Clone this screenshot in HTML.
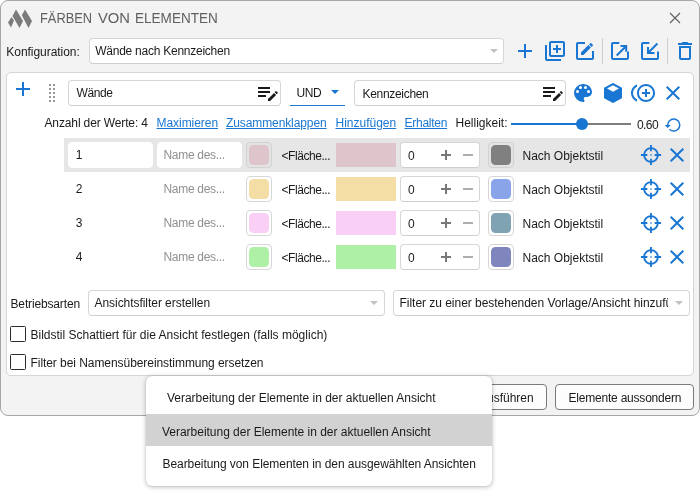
<!DOCTYPE html>
<html lang="de">
<head>
<meta charset="utf-8">
<title>Färben von Elementen</title>
<style>
*{box-sizing:border-box;margin:0;padding:0}
html,body{width:700px;height:494px;background:#fff;overflow:hidden}
body{font-family:"Liberation Sans",sans-serif;font-size:12px;color:#1a1a1a;position:relative}
.abs{position:absolute}
#win{position:absolute;left:0;top:0;width:700px;height:416px;background:#f3f3f3;border:1px solid #a6a6a6;border-radius:8px}
#panel{position:absolute;left:6px;top:72px;width:688px;height:304px;background:#fff;border:1px solid #d5d5d5;border-radius:5px}
.t{position:absolute;white-space:nowrap;line-height:16px;height:16px}
.tb{position:absolute;background:#fff;border:1px solid #d6d6d6;border-bottom-color:#cfcfcf;border-radius:4px}
.lnk{color:#1976d2;text-decoration:underline}
.ico{position:absolute;width:24px;height:24px;fill:#1976d2}
.sw{position:absolute;width:26px;height:26px;border:1px solid #d6d6d6;border-radius:4px;background:#fff}
.sw i{position:absolute;left:2px;top:2px;width:20px;height:20px;border-radius:4.500px}
.sw.r1{background:#e3e3e3;border-color:#d2d2d2}
.rect{position:absolute;left:336px;width:60px;height:24px}
.ph{color:#909090}
.pm{position:absolute;background:#787878}
.cb{position:absolute;left:10px;width:16px;height:16px;border:1px solid #2b2b2b;border-radius:1.500px;background:#fff}
.btn{position:absolute;top:384px;height:26px;border:1px solid #7a7a7a;border-radius:4px;background:#fdfdfd}
#pop{position:absolute;left:146px;top:376px;width:346px;height:110px;background:#fff;border-radius:6px;box-shadow:0 1px 5px rgba(0,0,0,.28),0 0 1px rgba(0,0,0,.25)}
#hl{position:absolute;left:146px;top:414px;width:346px;height:32px;background:#d2d2d2}
#rowhl{position:absolute;left:64px;top:138px;width:626px;height:34px;background:#e6e6e6}
</style>
</head>
<body>
<div id="root" style="position:absolute;left:0;top:0;width:700px;height:494px;will-change:transform;opacity:0.999">
<div id="win"></div>

<!-- title bar -->
<svg class="abs" style="left:0;top:0" width="40" height="34" viewBox="0 0 40 34"><path fill="#7b7b7b" d="M11.500 17 L14 20.600 L11 27.600 L8 22.500 Z M16 9.600 L23 21 L19.500 27.900 L12.500 16 Z M25 9.600 L32 21 L28.500 27.900 L21.800 15.200 Z"/></svg>
<div class="t" id="title" style="left:40.300px;top:10px;font-size:15px;color:#606060;transform-origin:0 0;transform:scaleX(0.856)">FÄRBEN</div><div class="t" id="title2" style="left:98px;top:10px;font-size:15px;color:#606060;transform-origin:0 0;transform:scaleX(0.985)">VON</div><div class="t" id="title3" style="left:134.500px;top:10px;font-size:15px;color:#606060;transform-origin:0 0;transform:scaleX(0.903)">ELEMENTEN</div>
<svg class="abs" style="left:669px;top:12px" width="13" height="13" viewBox="0 0 13 13"><path d="M1 1 L11 11 M11 1 L1 11" stroke="#606060" stroke-width="1.1" fill="none"/></svg>

<!-- config row -->
<div class="t" id="konf" style="letter-spacing:-0.040px;left:6.300px;top:44px">Konfiguration:</div>
<div class="tb" style="left:89px;top:38px;width:415px;height:26px"></div>
<div class="t" id="cfgv" style="letter-spacing:-0.245px;left:95.200px;top:43px">Wände nach Kennzeichen</div>
<svg class="abs" style="left:489.500px;top:49px" width="8" height="4" viewBox="0 0 8 4"><path d="M0 0H8L4 4Z" fill="#c2c2c2"/></svg>

<svg class="ico" style="left:513px;top:39px" viewBox="0 0 24 24"><path d="M19,13H13V19H11V13H5V11H11V5H13V11H19V13Z"/></svg>
<svg class="ico" style="left:543px;top:39px" viewBox="0 0 24 24"><path d="M4 6H2V20C2 21.1 2.9 22 4 22H18V20H4V6M20 2H8C6.9 2 6 2.9 6 4V16C6 17.1 6.9 18 8 18H20C21.1 18 22 17.1 22 16V4C22 2.900 21.1 2 20 2M20 16H8V4H20V16M13 14H15V11H18V9H15V6H13V9H10V11H13V14Z"/></svg>
<svg class="ico" style="left:573px;top:39px" viewBox="0 0 24 24"><path d="M5,3C3.89,3 3,3.89 3,5V19A2,2 0 0,0 5,21H19A2,2 0 0,0 21,19V12H19V19H5V5H12V3H5M17.78,4C17.61,4 17.43,4.07 17.3,4.2L16.08,5.41L18.58,7.91L19.8,6.7C20.06,6.44 20.06,6 19.8,5.75L18.250,4.2C18.12,4.07 17.95,4 17.78,4M15.37,6.12L8,13.5V16H10.5L17.87,8.62L15.37,6.12Z"/></svg>
<div class="abs" style="left:602px;top:38px;width:1px;height:26px;background:#cfcfcf"></div>
<svg class="ico" style="left:608px;top:39px" viewBox="0 0 24 24"><path d="M5,3C3.9,3 3,3.9 3,5V19A2,2 0 0,0 5,21H19A2,2 0 0,0 21,19V12.400H19V19H5V5H11.300V3H5Z M12.500,6H19.200V12.700H17.200V9.410L9.400,17.200L8,15.800L15.790,8H12.500Z" transform="translate(0,0)"/></svg>
<svg class="ico" style="left:638px;top:39px" viewBox="0 0 24 24"><path d="M5,3C3.9,3 3,3.9 3,5V19A2,2 0 0,0 5,21H19A2,2 0 0,0 21,19V12.400H19V19H5V5H11.300V3H5Z M9,15V8H11V11.590L18.750,3.850L20.150,5.250L12.410,13H16.500V15Z"/></svg>
<div class="abs" style="left:667px;top:38px;width:1px;height:26px;background:#cfcfcf"></div>
<svg class="ico" style="left:673px;top:39px" viewBox="0 0 24 24"><path d="M6,19A2,2 0 0,0 8,21H16A2,2 0 0,0 18,19V7H6V19M8,9H16V19H8V9M15.5,4L14.5,3H9.5L8.5,4H5V6H19V4H15.5Z"/></svg>

<!-- panel -->
<div id="panel"></div>
<svg class="ico" style="left:11px;top:77px" viewBox="0 0 24 24"><path d="M19,13H13V19H11V13H5V11H11V5H13V11H19V13Z"/></svg>
<svg class="abs" style="left:49px;top:84px" width="7" height="18" viewBox="0 0 7 18"><g fill="#969696"><rect x="0" y="0" width="2" height="2"/><rect x="4" y="0" width="2" height="2"/><rect x="0" y="4" width="2" height="2"/><rect x="4" y="4" width="2" height="2"/><rect x="0" y="8" width="2" height="2"/><rect x="4" y="8" width="2" height="2"/><rect x="0" y="12" width="2" height="2"/><rect x="4" y="12" width="2" height="2"/><rect x="0" y="16" width="2" height="2"/><rect x="4" y="16" width="2" height="2"/></g></svg>

<div class="tb" style="left:68px;top:80px;width:213px;height:26px"></div>
<div class="t" id="wande" style="letter-spacing:-0.370px;left:76.500px;top:85.300px">Wände</div>
<svg class="ico" style="left:256px;top:81px;fill:#1a1a1a" viewBox="0 0 24 24"><path d="M2,6.100V7.900H14V6.100H2M2,10.100V11.900H14V10.100H2M20.040,10.130C19.900,10.130 19.760,10.190 19.650,10.300L18.650,11.300L20.700,13.350L21.700,12.350C21.920,12.140 21.920,11.790 21.700,11.580L20.420,10.300C20.310,10.190 20.180,10.130 20.040,10.130M18.070,11.880L12,17.940V20H14.060L20.120,13.930L18.070,11.880M2,14.100V15.900H10V14.100H2Z"/></svg>

<div class="t" id="und" style="letter-spacing:-0.450px;left:296.500px;top:85px">UND</div>
<svg class="abs" style="left:331px;top:90px" width="8" height="4" viewBox="0 0 8 4"><path d="M0 0H8L4 4Z" fill="#1976d2"/></svg>
<div class="abs" style="left:290px;top:105px;width:55px;height:1px;background:#1976d2"></div>

<div class="tb" style="left:354px;top:80px;width:212px;height:26px"></div>
<div class="t" id="kenn" style="letter-spacing:-0.310px;left:362.500px;top:85.500px">Kennzeichen</div>
<svg class="ico" style="left:541px;top:81px;fill:#1a1a1a" viewBox="0 0 24 24"><path d="M2,6.100V7.900H14V6.100H2M2,10.100V11.900H14V10.100H2M20.040,10.130C19.900,10.130 19.760,10.190 19.650,10.300L18.650,11.300L20.700,13.350L21.700,12.350C21.920,12.140 21.920,11.790 21.700,11.580L20.420,10.300C20.310,10.190 20.180,10.130 20.040,10.130M18.070,11.880L12,17.940V20H14.060L20.120,13.930L18.070,11.880M2,14.100V15.900H10V14.100H2Z"/></svg>

<svg class="ico" style="left:571.300px;top:81px" viewBox="0 0 24 24"><path d="M17.500,12A1.500,1.500 0 0,1 16,10.500A1.500,1.500 0 0,1 17.500,9A1.500,1.500 0 0,1 19,10.500A1.500,1.500 0 0,1 17.500,12M14.500,8A1.500,1.500 0 0,1 13,6.500A1.500,1.500 0 0,1 14.500,5A1.500,1.500 0 0,1 16,6.500A1.500,1.500 0 0,1 14.500,8M9.500,8A1.500,1.500 0 0,1 8,6.500A1.500,1.500 0 0,1 9.500,5A1.500,1.500 0 0,1 11,6.500A1.500,1.500 0 0,1 9.500,8M6.500,12A1.500,1.500 0 0,1 5,10.500A1.500,1.500 0 0,1 6.500,9A1.500,1.500 0 0,1 8,10.500A1.500,1.500 0 0,1 6.500,12M12,3A9,9 0 0,0 3,12A9,9 0 0,0 12,21A1.500,1.500 0 0,0 13.500,19.500C13.500,19.110 13.350,18.760 13.110,18.500C12.880,18.230 12.730,17.880 12.730,17.500A1.500,1.500 0 0,1 14.230,16H16A5,5 0 0,0 21,11C21,6.580 16.970,3 12,3Z"/></svg>
<svg class="ico" style="left:601px;top:81px" viewBox="0 0 24 24"><path d="M21,16.500C21,16.880 20.790,17.210 20.470,17.380L12.570,21.820C12.410,21.940 12.210,22 12,22C11.790,22 11.590,21.940 11.430,21.820L3.530,17.380C3.210,17.210 3,16.880 3,16.500V7.500C3,7.120 3.210,6.790 3.530,6.620L11.430,2.180C11.590,2.060 11.790,2 12,2C12.210,2 12.410,2.060 12.570,2.180L20.470,6.620C20.790,6.790 21,7.120 21,7.500V16.500M12,4.150L6.040,7.500L12,10.850L17.960,7.500L12,4.150Z"/></svg>
<svg class="ico" style="left:630.500px;top:81px" viewBox="0 0 24 24"><path d="M16,8H14V11H11V13H14V16H16V13H19V11H16M2,12C2,9.210 3.640,6.800 6,5.680V3.500C2.500,4.760 0,8.090 0,12C0,15.910 2.500,19.240 6,20.500V18.320C3.640,17.200 2,14.790 2,12M15,3C10.040,3 6,7.040 6,12C6,16.960 10.040,21 15,21C19.960,21 24,16.960 24,12C24,7.040 19.960,3 15,3M15,19C11.140,19 8,15.860 8,12C8,8.140 11.140,5 15,5C18.860,5 22,8.140 22,12C22,15.860 18.860,19 15,19Z"/></svg>
<svg class="ico" style="left:661px;top:81px" viewBox="0 0 24 24"><path d="M19,6.410L17.590,5L12,10.590L6.410,5L5,6.410L10.590,12L5,17.590L6.410,19L12,13.410L17.590,19L19,17.590L13.410,12L19,6.410Z"/></svg>

<!-- links row -->
<div class="t" id="anz" style="letter-spacing:-0.130px;left:44.500px;top:115.100px">Anzahl der Werte: 4</div>
<div class="t lnk" id="l1" style="letter-spacing:-0.050px;left:156.500px;top:115.100px">Maximieren</div>
<div class="t lnk" id="l2" style="letter-spacing:-0.100px;left:226px;top:115.100px">Zusammenklappen</div>
<div class="t lnk" id="l3" style="left:335.500px;top:115.100px">Hinzufügen</div>
<div class="t lnk" id="l4" style="letter-spacing:-0.260px;left:404.500px;top:115.100px">Erhalten</div>
<div class="t" id="hell" style="left:455.500px;top:115.100px">Helligkeit:</div>
<div class="abs" style="left:511px;top:123px;width:71px;height:2px;background:#1976d2"></div>
<div class="abs" style="left:582px;top:123px;width:49px;height:2px;background:#7d7d7d"></div>
<div class="abs" style="left:576px;top:118px;width:12px;height:12px;border-radius:6px;background:#1976d2"></div>
<div class="t" id="v060" style="letter-spacing:-0.600px;left:637px;top:116.500px">0.60</div>
<svg class="abs" style="left:663.800px;top:116px;fill:#1976d2" width="18" height="18" viewBox="0 0 24 24"><path d="M13,3A9,9 0 0,0 4,12H1L4.890,15.890L4.960,16.030L9,12H6A7,7 0 0,1 13,5A7,7 0 0,1 20,12A7,7 0 0,1 13,19C11.070,19 9.320,18.210 8.060,16.940L6.640,18.360C8.270,20 10.500,21 13,21A9,9 0 0,0 22,12A9,9 0 0,0 13,3Z"/></svg>

<!-- rows -->
<div id="rowhl"></div>
<div class="tb" style="left:68px;top:142px;width:85px;height:26px;border-color:#fff"></div>
<div class="tb" style="left:157px;top:142px;width:85px;height:26px;border-color:#fff"></div>
<div class="t" style="left:75.800px;top:146.5px">1</div>
<div class="t ph" style="left:163.500px;top:146.5px;letter-spacing:-0.3px">Name des...</div>
<div class="sw r1" style="left:246px;top:142px"><i style="background:#dec5cb"></i></div>
<div class="t" style="left:281.500px;top:148px;letter-spacing:-0.45px">&lt;Fläche...</div>
<div class="rect" style="top:143px;background:#dec5cb"></div>
<div class="tb" style="left:400px;top:142px;width:80px;height:26px"></div>
<div class="t" style="left:408px;top:148px">0</div>
<div class="pm" style="left:441px;top:154.3px;width:10px;height:1.400px"></div><div class="pm" style="left:445.300px;top:150.0px;width:1.400px;height:10px"></div>
<div class="pm" style="left:463px;top:154.3px;width:10px;height:1.400px;background:#adadad"></div>
<div class="sw r1" style="left:488px;top:142px"><i style="background:#808080"></i></div>
<div class="t" style="left:522.500px;top:148px">Nach Objektstil</div>
<svg class="abs" style="left:640px;top:144px" width="22" height="22" viewBox="0 0 24 24"><g fill="none" stroke="#1976d2" stroke-width="2"><circle cx="12" cy="12" r="7.500"/><path d="M12 1V8M12 16V23M1 12H8M16 12H23"/></g><rect x="11" y="11" width="2" height="2" fill="#1976d2" opacity="0.550"/></svg>
<svg class="ico" style="left:665.300px;top:142.7px" viewBox="0 0 24 24"><path d="M19,6.410L17.590,5L12,10.590L6.410,5L5,6.410L10.590,12L5,17.590L6.410,19L12,13.410L17.590,19L19,17.590L13.410,12L19,6.410Z"/></svg>

<div class="t" style="left:75.800px;top:180.5px">2</div>
<div class="t ph" style="left:163.500px;top:180.5px;letter-spacing:-0.3px">Name des...</div>
<div class="sw" style="left:246px;top:176px"><i style="background:#f5dda6"></i></div>
<div class="t" style="left:281.500px;top:182px;letter-spacing:-0.45px">&lt;Fläche...</div>
<div class="rect" style="top:177px;background:#f5dda6"></div>
<div class="tb" style="left:400px;top:176px;width:80px;height:26px"></div>
<div class="t" style="left:408px;top:182px">0</div>
<div class="pm" style="left:441px;top:188.3px;width:10px;height:1.400px"></div><div class="pm" style="left:445.300px;top:184.0px;width:1.400px;height:10px"></div>
<div class="pm" style="left:463px;top:188.3px;width:10px;height:1.400px;background:#adadad"></div>
<div class="sw" style="left:488px;top:176px"><i style="background:#8aa4ea"></i></div>
<div class="t" style="left:522.500px;top:182px">Nach Objektstil</div>
<svg class="abs" style="left:640px;top:178px" width="22" height="22" viewBox="0 0 24 24"><g fill="none" stroke="#1976d2" stroke-width="2"><circle cx="12" cy="12" r="7.500"/><path d="M12 1V8M12 16V23M1 12H8M16 12H23"/></g><rect x="11" y="11" width="2" height="2" fill="#1976d2" opacity="0.550"/></svg>
<svg class="ico" style="left:665.300px;top:176.7px" viewBox="0 0 24 24"><path d="M19,6.410L17.590,5L12,10.590L6.410,5L5,6.410L10.590,12L5,17.590L6.410,19L12,13.410L17.590,19L19,17.590L13.410,12L19,6.410Z"/></svg>

<div class="t" style="left:75.800px;top:214.5px">3</div>
<div class="t ph" style="left:163.500px;top:214.5px;letter-spacing:-0.3px">Name des...</div>
<div class="sw" style="left:246px;top:210px"><i style="background:#f9cff5"></i></div>
<div class="t" style="left:281.500px;top:216px;letter-spacing:-0.45px">&lt;Fläche...</div>
<div class="rect" style="top:211px;background:#f9cff5"></div>
<div class="tb" style="left:400px;top:210px;width:80px;height:26px"></div>
<div class="t" style="left:408px;top:216px">0</div>
<div class="pm" style="left:441px;top:222.3px;width:10px;height:1.400px"></div><div class="pm" style="left:445.300px;top:218.0px;width:1.400px;height:10px"></div>
<div class="pm" style="left:463px;top:222.3px;width:10px;height:1.400px;background:#adadad"></div>
<div class="sw" style="left:488px;top:210px"><i style="background:#7fa3b3"></i></div>
<div class="t" style="left:522.500px;top:216px">Nach Objektstil</div>
<svg class="abs" style="left:640px;top:212px" width="22" height="22" viewBox="0 0 24 24"><g fill="none" stroke="#1976d2" stroke-width="2"><circle cx="12" cy="12" r="7.500"/><path d="M12 1V8M12 16V23M1 12H8M16 12H23"/></g><rect x="11" y="11" width="2" height="2" fill="#1976d2" opacity="0.550"/></svg>
<svg class="ico" style="left:665.300px;top:210.7px" viewBox="0 0 24 24"><path d="M19,6.410L17.590,5L12,10.590L6.410,5L5,6.410L10.590,12L5,17.590L6.410,19L12,13.410L17.590,19L19,17.590L13.410,12L19,6.410Z"/></svg>

<div class="t" style="left:75.800px;top:248.5px">4</div>
<div class="t ph" style="left:163.500px;top:248.5px;letter-spacing:-0.3px">Name des...</div>
<div class="sw" style="left:246px;top:244px"><i style="background:#aef0a6"></i></div>
<div class="t" style="left:281.500px;top:250px;letter-spacing:-0.45px">&lt;Fläche...</div>
<div class="rect" style="top:245px;background:#aef0a6"></div>
<div class="tb" style="left:400px;top:244px;width:80px;height:26px"></div>
<div class="t" style="left:408px;top:250px">0</div>
<div class="pm" style="left:441px;top:256.3px;width:10px;height:1.400px"></div><div class="pm" style="left:445.300px;top:252.0px;width:1.400px;height:10px"></div>
<div class="pm" style="left:463px;top:256.3px;width:10px;height:1.400px;background:#adadad"></div>
<div class="sw" style="left:488px;top:244px"><i style="background:#7f86bd"></i></div>
<div class="t" style="left:522.500px;top:250px">Nach Objektstil</div>
<svg class="abs" style="left:640px;top:246px" width="22" height="22" viewBox="0 0 24 24"><g fill="none" stroke="#1976d2" stroke-width="2"><circle cx="12" cy="12" r="7.500"/><path d="M12 1V8M12 16V23M1 12H8M16 12H23"/></g><rect x="11" y="11" width="2" height="2" fill="#1976d2" opacity="0.550"/></svg>
<svg class="ico" style="left:665.300px;top:244.7px" viewBox="0 0 24 24"><path d="M19,6.410L17.590,5L12,10.590L6.410,5L5,6.410L10.590,12L5,17.590L6.410,19L12,13.410L17.590,19L19,17.590L13.410,12L19,6.410Z"/></svg>

<!-- bottom -->
<div class="t" id="betr" style="letter-spacing:-0.150px;left:10.500px;top:296px">Betriebsarten</div>
<div class="tb" style="left:88px;top:290px;width:297px;height:26px"></div>
<div class="t" id="ans" style="letter-spacing:-0.050px;left:94.500px;top:294.500px">Ansichtsfilter erstellen</div>
<svg class="abs" style="left:370px;top:301px" width="8" height="4" viewBox="0 0 8 4"><path d="M0 0H8L4 4Z" fill="#c2c2c2"/></svg>
<div class="tb" style="left:393px;top:290px;width:297px;height:26px"></div>
<div class="t" id="filt" style="letter-spacing:-0.030px;left:399.500px;top:294.500px;width:268px;overflow:hidden">Filter zu einer bestehenden Vorlage/Ansicht hinzufügen</div>
<svg class="abs" style="left:675px;top:301px" width="8" height="4" viewBox="0 0 8 4"><path d="M0 0H8L4 4Z" fill="#c2c2c2"/></svg>

<div class="cb" style="top:326px"></div>
<div class="t" id="c1" style="left:30.500px;top:327px">Bildstil Schattiert für die Ansicht festlegen (falls möglich)</div>
<div class="cb" style="top:354px"></div>
<div class="t" id="c2" style="letter-spacing:-0.060px;left:30.500px;top:355px">Filter bei Namensübereinstimmung ersetzen</div>

<div class="btn" style="left:466px;width:81px"></div>
<div class="t" id="b1" style="left:479px;top:390px">Ausführen</div>
<div class="btn" style="left:555px;width:139px"></div>
<div class="t" id="b2" style="letter-spacing:-0.210px;left:568.500px;top:390px">Elemente aussondern</div>

<!-- popup -->
<div id="pop"></div>
<div id="hl"></div>
<div class="t" id="p1" style="letter-spacing:-0.020px;left:167px;top:389.500px">Verarbeitung der Elemente in der aktuellen Ansicht</div>
<div class="t" id="p2" style="letter-spacing:-0.020px;left:162px;top:423.500px">Verarbeitung der Elemente in der aktuellen Ansicht</div>
<div class="t" id="p3" style="letter-spacing:-0.065px;left:162.500px;top:455.500px">Bearbeitung von Elementen in den ausgewählten Ansichten</div>
</div>
</body>
</html>
